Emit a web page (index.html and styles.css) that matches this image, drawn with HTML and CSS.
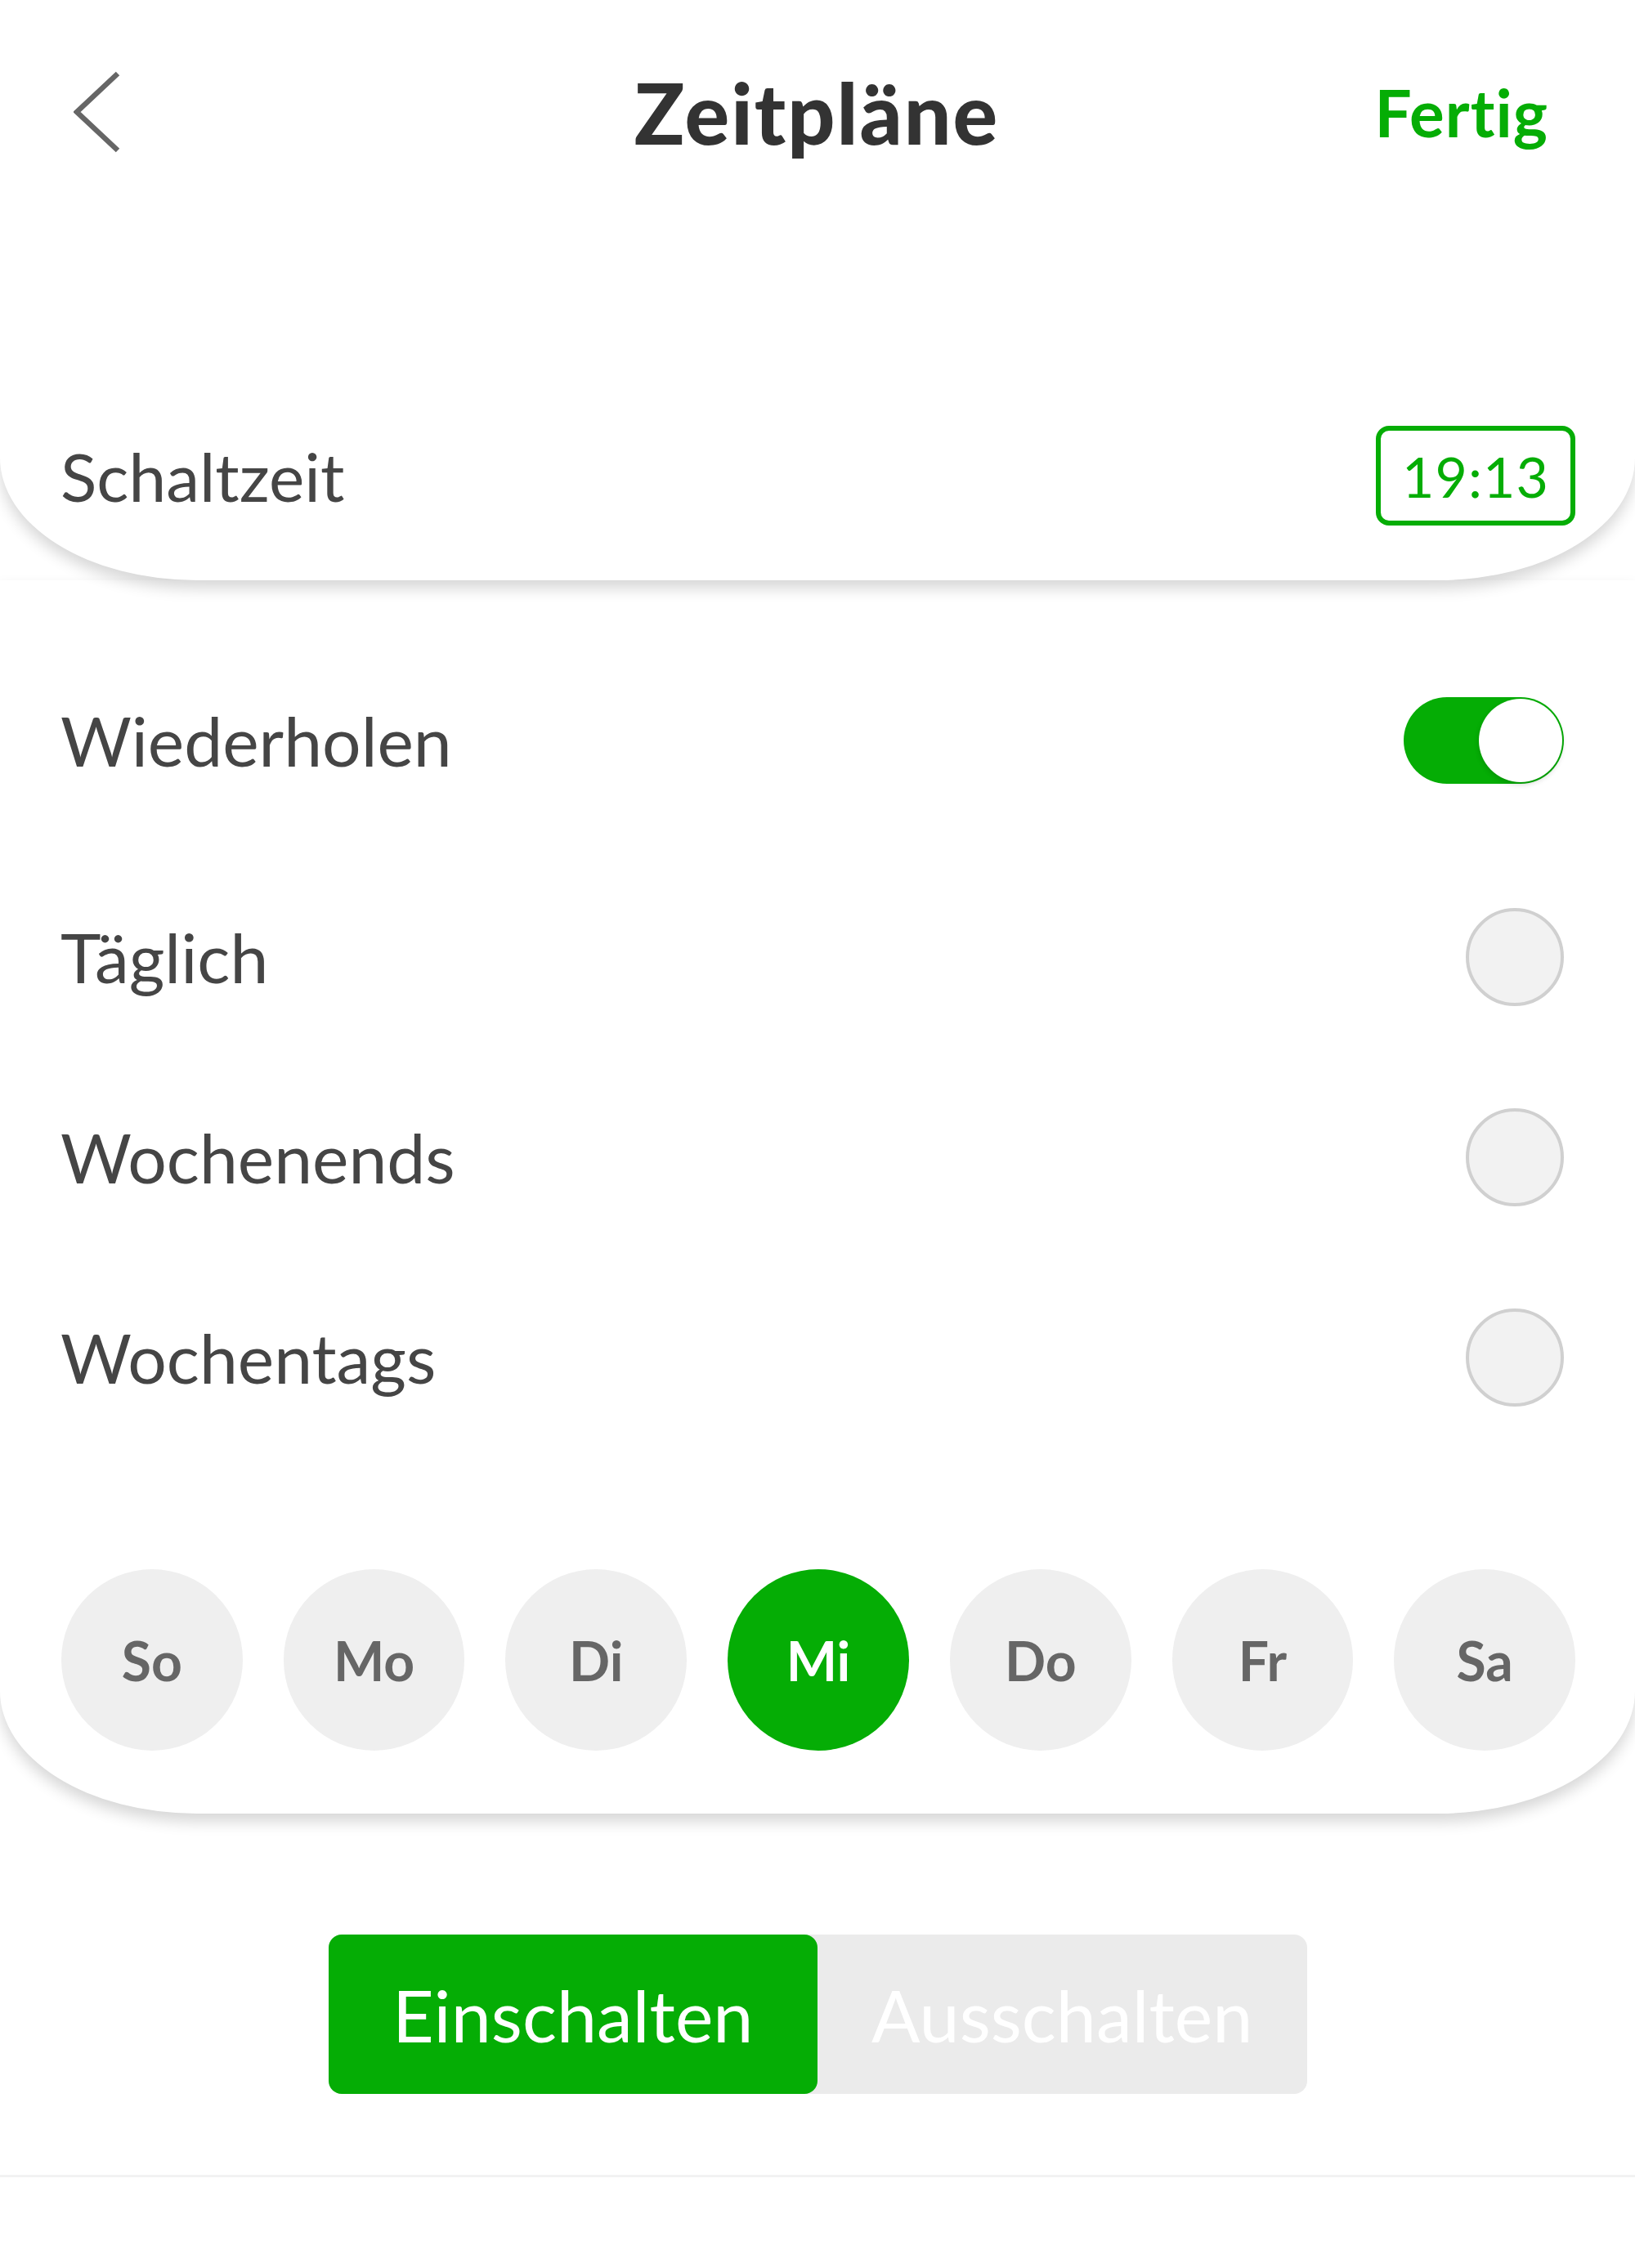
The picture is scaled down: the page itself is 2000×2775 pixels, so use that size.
FILE: index.html
```html
<!DOCTYPE html>
<html lang="de">
<head>
    <meta charset="UTF-8">
    <meta name="viewport" content="width=device-width, initial-scale=1.0">
    <title>Zeitpläne</title>
    <link rel="stylesheet" href="styles.css">
</head>
<body>

    <!-- Top card: navigation and switching time -->
    <div class="top-card">
        <header class="nav">
            <button class="back" aria-label="Zurück">
                <svg width="58" height="100" viewBox="0 0 58 100">
                    <polyline points="54,3 4,50 54,97" fill="none" stroke="#666" stroke-width="6.5" stroke-linejoin="miter"/>
                </svg>
            </button>
            <h1 class="title">Zeitpläne</h1>
            <button class="done">Fertig</button>
        </header>

        <div class="time-row">
            <span class="label">Schaltzeit</span>
            <span class="time-box">19:13</span>
        </div>
    </div>

    <!-- Repeat card -->
    <div class="repeat-card">
        <div class="row row-first">
            <span class="label">Wiederholen</span>
            <span class="toggle is-on"><span class="knob"></span></span>
        </div>
        <div class="row">
            <span class="label">Täglich</span>
            <span class="radio"></span>
        </div>
        <div class="row">
            <span class="label">Wochenends</span>
            <span class="radio"></span>
        </div>
        <div class="row">
            <span class="label">Wochentags</span>
            <span class="radio"></span>
        </div>

        <div class="days">
            <span class="day">So</span>
            <span class="day">Mo</span>
            <span class="day">Di</span>
            <span class="day active">Mi</span>
            <span class="day">Do</span>
            <span class="day">Fr</span>
            <span class="day">Sa</span>
        </div>
    </div>

    <!-- On / off action -->
    <div class="actions">
        <div class="segmented">
            <button class="seg active">Einschalten</button>
            <button class="seg">Ausschalten</button>
        </div>
    </div>

    <div class="divider"></div>

</body>
</html>
```

FILE: styles.css
```css
/* Basic reset */
* {
    margin: 0;
    padding: 0;
    box-sizing: border-box;
}

body {
    width: 2000px;
    background: #fff;
    font-family: Lato, "Open Sans", sans-serif;
    color: #444;
}

button {
    border: none;
    background: none;
    font-family: inherit;
    cursor: pointer;
}

/* Top card */
.top-card {
    position: relative;
    z-index: 2;
    height: 710px;
    background: #fff;
    border-radius: 0 0 240px 240px / 0 0 150px 150px;
    box-shadow: 0 10px 18px rgba(0, 0, 0, 0.16);
}

.nav {
    height: 274px;
    display: grid;
    grid-template-columns: 1fr auto 1fr;
    align-items: center;
    padding: 0 106px 0 90px;
}

.back {
    justify-self: start;
    display: flex;
    width: 58px;
    height: 100px;
}

.title {
    font-size: 102px;
    font-weight: 900;
    color: #333;
    letter-spacing: 2px;
    margin-left: 14px;
}

.done {
    justify-self: end;
    font-size: 80px;
    font-weight: 700;
    color: #05ad05;
    letter-spacing: 1px;
}

.time-row {
    margin-top: 247px;
    height: 122px;
    display: flex;
    align-items: center;
    justify-content: space-between;
    padding: 0 73px 0 74px;
}

.label {
    font-size: 82px;
    font-weight: 400;
    color: #454545;
}

.time-box {
    width: 244px;
    height: 122px;
    border: 6px solid #05ad05;
    border-radius: 16px;
    display: flex;
    align-items: center;
    justify-content: center;
    font-size: 68px;
    font-weight: 400;
    color: #05ad05;
    letter-spacing: 1px;
}

/* Repeat card */
.repeat-card {
    position: relative;
    z-index: 1;
    background: #fff;
    padding: 73px 0 77px;
    border-radius: 0 0 240px 240px / 0 0 150px 150px;
    box-shadow: 0 10px 18px rgba(0, 0, 0, 0.16);
}

.row {
    height: 245px;
    display: flex;
    align-items: center;
    justify-content: space-between;
    padding: 0 87px 0 74px;
}

.row-first {
    margin-bottom: 20px;
}

.row .label {
    font-size: 84px;
}

.toggle {
    position: relative;
    width: 196px;
    height: 106px;
    border-radius: 53px;
    background: #05ad05;
}

.toggle .knob {
    position: absolute;
    top: 2px;
    right: 2px;
    width: 102px;
    height: 102px;
    border-radius: 50%;
    background: #fff;
    box-shadow: 0 3px 6px rgba(0, 0, 0, 0.15);
}

.radio {
    width: 120px;
    height: 120px;
    border-radius: 50%;
    background: #f2f2f2;
    border: 4px solid #d0d0d0;
}

.days {
    margin-top: 137px;
    display: flex;
    gap: 50px;
    padding: 0 73px 0 75px;
}

.day {
    width: 222px;
    height: 222px;
    border-radius: 50%;
    background: #efefef;
    display: flex;
    align-items: center;
    justify-content: center;
    font-size: 66px;
    font-weight: 700;
    color: #666;
}

.day.active {
    background: #05ad05;
    color: #fff;
}

/* Segmented on / off */
.actions {
    margin-top: 148px;
    display: flex;
    justify-content: center;
}

.segmented {
    display: flex;
    width: 1197px;
    height: 195px;
    background: #ebebeb;
    border-radius: 16px;
}

.seg {
    flex: 1;
    font-size: 88px;
    font-weight: 400;
    color: #fff;
    border-radius: 16px;
}

.seg.active {
    background: #05ad05;
}

.divider {
    margin-top: 99px;
    height: 3px;
    background: #f2f2f2;
}
```
